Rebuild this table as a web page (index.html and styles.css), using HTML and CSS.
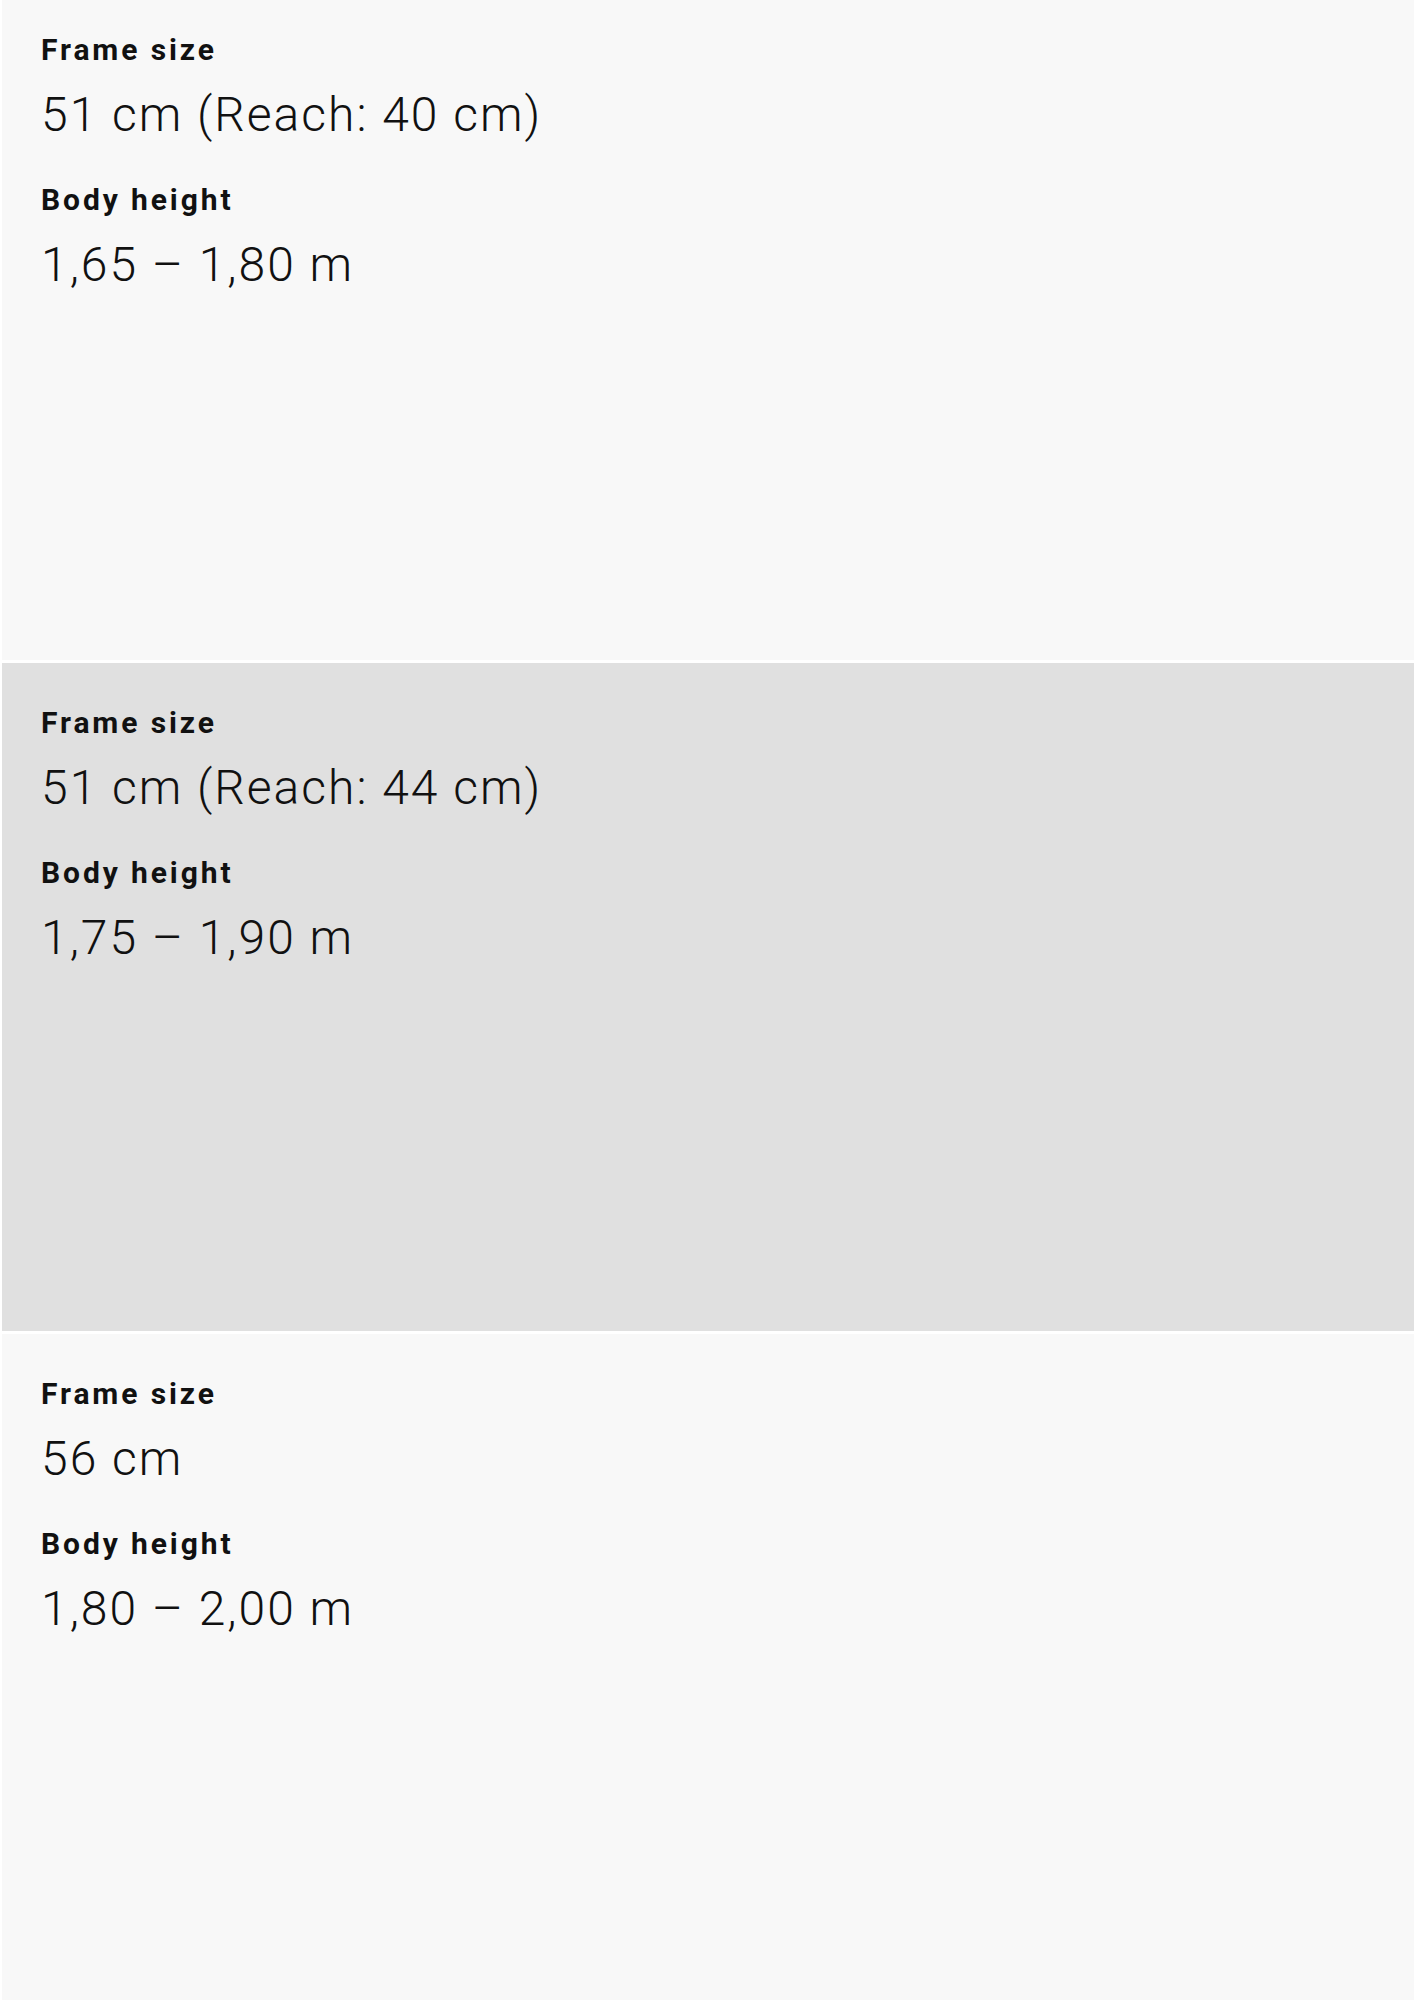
FILE: index.html
```html
<!DOCTYPE html>
<html lang="en">
<head>
<meta charset="utf-8">
<title>Frame sizes</title>
<link rel="stylesheet" href="styles.css">
</head>
<body>
<div class="list">
  <section class="card card-first">
    <div class="label">Frame size</div>
    <div class="value">51 cm (Reach: 40 cm)</div>
    <div class="label">Body height</div>
    <div class="value">1,65 – 1,80 m</div>
  </section>
  <section class="card card-active">
    <div class="label">Frame size</div>
    <div class="value">51 cm (Reach: 44 cm)</div>
    <div class="label">Body height</div>
    <div class="value">1,75 – 1,90 m</div>
  </section>
  <section class="card">
    <div class="label">Frame size</div>
    <div class="value">56 cm</div>
    <div class="label">Body height</div>
    <div class="value">1,80 – 2,00 m</div>
  </section>
</div>
</body>
</html>
```
FILE: styles.css
```css
html, body {
  margin: 0;
  padding: 0;
  background: #ffffff;
}
body {
  padding-left: 2px;
  font-family: Roboto, "Liberation Sans", sans-serif;
  color: #111111;
  overflow: hidden;
}
.list {
  display: flex;
  flex-direction: column;
  gap: 3px;
}
.card {
  box-sizing: border-box;
  height: 668px;
  padding: 43px 39px 0;
  background: #f8f8f8;
}
.card-first {
  height: 660px;
  padding-top: 33px;
}
.card-active {
  background: #e0e0e0;
}
.label {
  font-size: 30px;
  line-height: 34px;
  font-weight: 700;
  letter-spacing: 2.9px;
  margin-bottom: 20px;
}
.value {
  font-size: 48px;
  line-height: 56px;
  font-weight: 300;
  letter-spacing: 2px;
  margin-bottom: 40px;
}
```
